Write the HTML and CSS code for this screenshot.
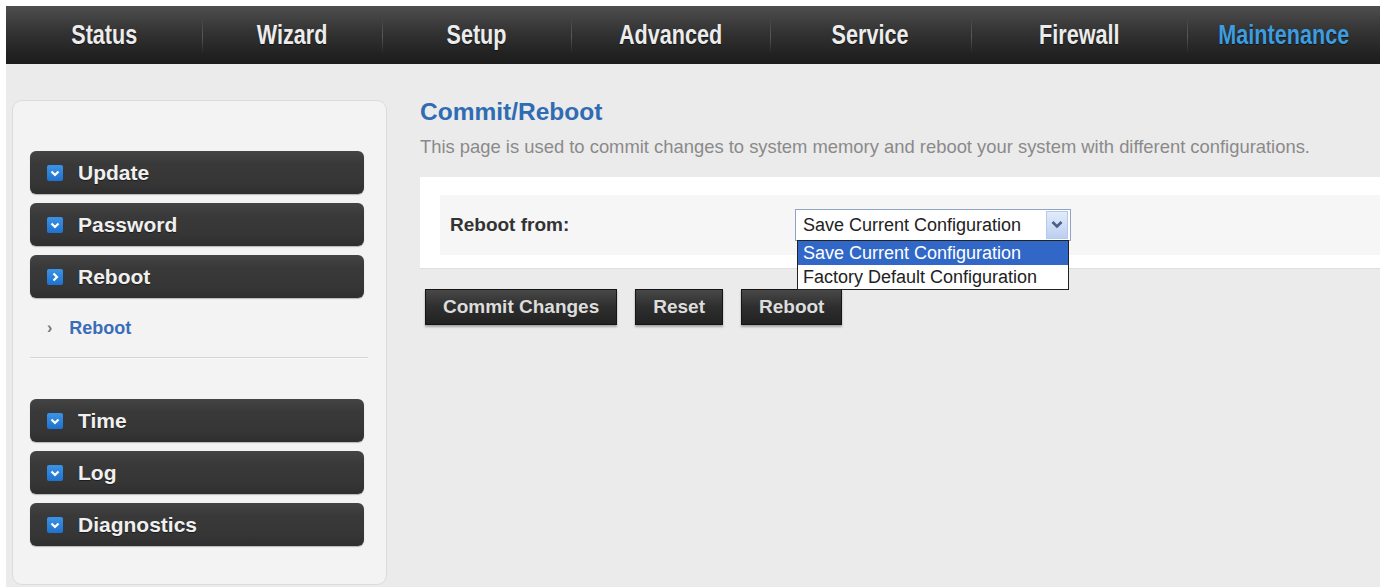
FILE: index.html
```html
<!DOCTYPE html>
<html lang="en">
<head>
    <meta charset="UTF-8">
    <meta name="viewport" content="width=device-width, initial-scale=1.0">
    <title>Maintenance - Commit/Reboot</title>
    <link rel="stylesheet" href="styles.css">
</head>
<body>
<div class="page">
    <nav class="topnav">
        <a href="#"><span>Status</span></a>
        <a href="#"><span>Wizard</span></a>
        <a href="#"><span>Setup</span></a>
        <a href="#"><span>Advanced</span></a>
        <a href="#"><span>Service</span></a>
        <a href="#"><span>Firewall</span></a>
        <a href="#" class="active"><span>Maintenance</span></a>
    </nav>

    <div class="layout">
        <!-- left menu -->
        <aside class="sidebar">
            <a href="#" class="menu-bar">
                <span class="ico"><svg viewBox="0 0 16 15"><path d="M4.5 6 L8 9.5 L11.5 6" /></svg></span>
                Update
            </a>
            <a href="#" class="menu-bar">
                <span class="ico"><svg viewBox="0 0 16 15"><path d="M4.5 6 L8 9.5 L11.5 6" /></svg></span>
                Password
            </a>
            <a href="#" class="menu-bar">
                <span class="ico"><svg viewBox="0 0 16 15"><path d="M6.5 4 L10 7.5 L6.5 11" /></svg></span>
                Reboot
            </a>
            <div class="submenu">
                <span class="bullet">&#8250;</span>
                <a href="#">Reboot</a>
            </div>
            <hr class="divider">
            <a href="#" class="menu-bar">
                <span class="ico"><svg viewBox="0 0 16 15"><path d="M4.5 6 L8 9.5 L11.5 6" /></svg></span>
                Time
            </a>
            <a href="#" class="menu-bar">
                <span class="ico"><svg viewBox="0 0 16 15"><path d="M4.5 6 L8 9.5 L11.5 6" /></svg></span>
                Log
            </a>
            <a href="#" class="menu-bar">
                <span class="ico"><svg viewBox="0 0 16 15"><path d="M4.5 6 L8 9.5 L11.5 6" /></svg></span>
                Diagnostics
            </a>
        </aside>

        <!-- page content -->
        <main class="content">
            <h1>Commit/Reboot</h1>
            <p class="desc">This page is used to commit changes to system memory and reboot your system with different configurations.</p>

            <div class="form-panel">
                <div class="form-row">
                    <label>Reboot from:</label>
                    <div class="select">
                        <span class="select-value">Save Current Configuration</span>
                        <span class="select-arrow"><svg viewBox="0 0 20 26"><path d="M5.5 10 L10 14.5 L14.5 10" /></svg></span>
                        <ul class="select-list">
                            <li class="selected">Save Current Configuration</li>
                            <li>Factory Default Configuration</li>
                        </ul>
                    </div>
                </div>
            </div>

            <div class="buttons">
                <button>Commit Changes</button>
                <button>Reset</button>
                <button>Reboot</button>
            </div>
        </main>
    </div>
</div>
</body>
</html>
```

FILE: styles.css
```css
/* General */
body {
    margin: 0;
    background: #fff;
    font-family: "Liberation Sans", Arial, sans-serif;
}

.page {
    margin: 6px 4px 0 6px;
    background: #ebebeb;
    min-height: 581px;
}

/* Top navigation */
.topnav {
    height: 58px;
    display: grid;
    grid-template-columns: 196px 180px 189px 199px 201px 216px 1fr;
    background: linear-gradient(#4e4e4e, #333 45%, #232323 80%, #1c1c1c);
}

.topnav a {
    position: relative;
    display: flex;
    align-items: center;
    justify-content: center;
    color: #ececec;
    text-decoration: none;
    font-weight: bold;
    font-size: 27px;
    text-shadow: 0 1px 1px rgba(0, 0, 0, 0.6);
}

/* narrow look of the original menu font */
.topnav a span {
    display: inline-block;
    transform: scaleX(0.8);
}

.topnav a + a::before {
    content: "";
    position: absolute;
    left: 0;
    top: 12px;
    bottom: 10px;
    width: 1px;
    background: linear-gradient(rgba(255, 255, 255, 0), rgba(255, 255, 255, 0.2), rgba(255, 255, 255, 0));
}

.topnav a.active {
    color: #3d9de0;
}

/* Layout */
.layout {
    display: flex;
    padding: 36px 0 0 6px;
}

/* Sidebar */
.sidebar {
    width: 375px;
    height: 485px;
    box-sizing: border-box;
    padding: 50px 22px 0 17px;
    background: #f3f3f3;
    border: 1px solid #dcdcdc;
    border-radius: 10px;
}

.menu-bar {
    display: flex;
    align-items: center;
    gap: 15px;
    height: 43px;
    margin-bottom: 9px;
    padding-left: 17px;
    border-radius: 6px;
    background: linear-gradient(#444, #393939 30%, #363636 70%, #2f2f2f);
    box-shadow: 0 1px 1px rgba(0, 0, 0, 0.25);
    color: #f0f0f0;
    font-weight: bold;
    font-size: 21px;
    text-decoration: none;
    text-shadow: 0 1px 1px rgba(0, 0, 0, 0.5);
}

.ico {
    width: 16px;
    height: 16px;
    border-radius: 2px;
    background: linear-gradient(#3b93e6, #1f72cf);
    display: flex;
}

.ico svg {
    width: 16px;
    height: 16px;
}

.ico path {
    fill: none;
    stroke: #fff;
    stroke-width: 2.2;
}

.submenu {
    display: flex;
    align-items: center;
    gap: 17px;
    height: 22px;
    padding: 19px 0 18px 17px;
    margin-top: -9px;
}

.submenu .bullet {
    color: #777;
    font-size: 16px;
    font-weight: bold;
}

.submenu a {
    color: #3a6db8;
    font-weight: bold;
    font-size: 18px;
    text-decoration: none;
}

.divider {
    margin: 0 -4px 40px 0;
    border: none;
    border-top: 1px solid #d4d4d4;
    border-bottom: 1px solid #fafafa;
}

/* Content */
.content {
    flex: 1;
    margin-left: 33px;
}

h1 {
    margin: 0;
    font-size: 24.5px;
    line-height: 24px;
    color: #2f6cb3;
}

.desc {
    margin: 12px 0 0;
    font-size: 18.4px;
    line-height: 22px;
    color: #8a8a8a;
}

.form-panel {
    margin-top: 19px;
    padding: 18px 0 13px 20px;
    background: #fff;
    border-bottom: 1px solid #dedede;
}

.form-row {
    display: flex;
    align-items: center;
    height: 60px;
    padding-left: 10px;
    background: #f6f6f6;
}

.form-row label {
    width: 345px;
    font-size: 19px;
    font-weight: bold;
    color: #333;
}

.select {
    position: relative;
    width: 276px;
    height: 32px;
    box-sizing: border-box;
    display: flex;
    align-items: center;
    padding-left: 7px;
    background: #fff;
    border: 1px solid #8fa5c3;
    font-size: 18px;
    color: #222;
}

.select-value {
    flex: 1;
}

.select-arrow {
    width: 22px;
    height: 28px;
    margin-right: 2px;
    display: flex;
    background: linear-gradient(#e2ebfa, #bccff1);
    border: 1px solid #b6c9ea;
    box-sizing: border-box;
}

.select-arrow svg {
    width: 20px;
    height: 26px;
}

.select-arrow path {
    fill: none;
    stroke: #4a5f86;
    stroke-width: 2.6;
}

.select-list {
    position: absolute;
    top: 30px;
    left: 1px;
    right: 1px;
    margin: 0;
    padding: 0;
    list-style: none;
    background: #fff;
    border: 1px solid #222;
}

.select-list li {
    height: 24px;
    line-height: 24px;
    padding-left: 5px;
}

.select-list li.selected {
    background: #3168c8;
    color: #fff;
}

/* Buttons */
.buttons {
    display: flex;
    gap: 18px;
    margin: 20px 0 0 5px;
}

.buttons button {
    height: 36px;
    padding: 0 17px;
    border: 1px solid #151515;
    background: linear-gradient(#484848, #2e2e2e 50%, #222);
    box-shadow: 0 2px 2px rgba(0, 0, 0, 0.3);
    color: #ddd;
    font-family: "Liberation Sans", Arial, sans-serif;
    font-weight: bold;
    font-size: 19px;
    cursor: pointer;
}
```
